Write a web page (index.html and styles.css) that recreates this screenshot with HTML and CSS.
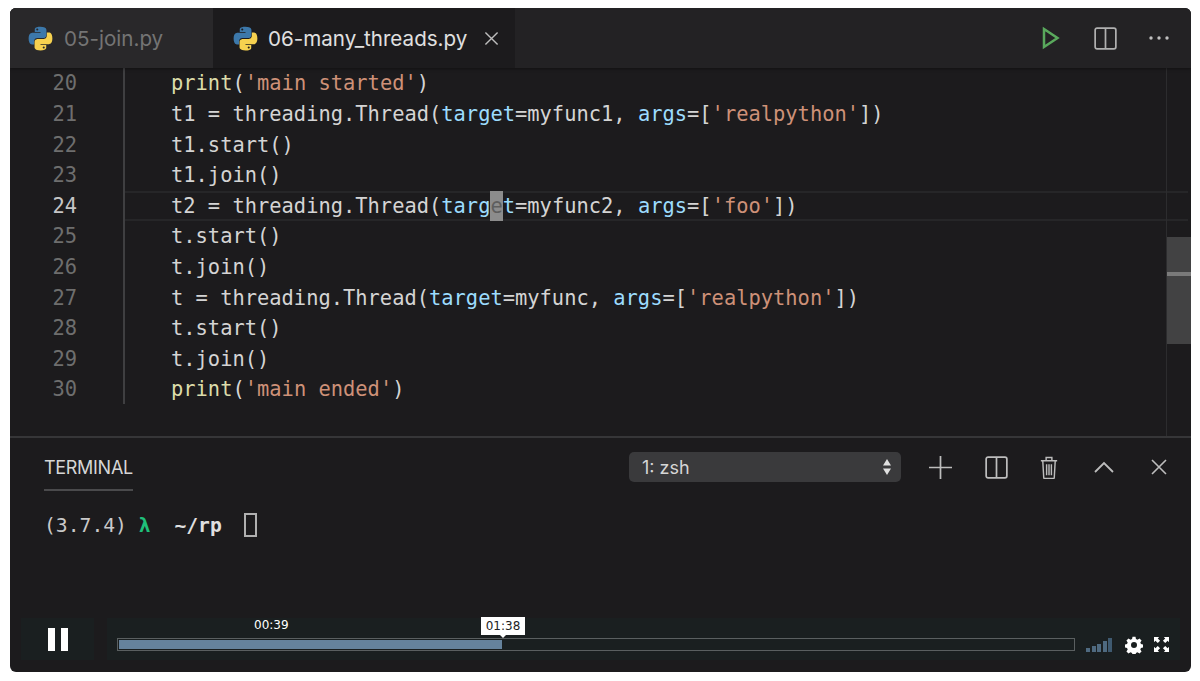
FILE: index.html
```html
<!DOCTYPE html>
<html lang="en">
<head>
<meta charset="utf-8">
<title>06-many_threads.py</title>
<link rel="stylesheet" href="styles.css">
</head>
<body>
<svg class="defs" width="0" height="0" aria-hidden="true">
  <symbol id="py" viewBox="0 0 24 24">
    <path fill="#3c78aa" d="M11.9 0.6C6.1 0.6 6.5 3.1 6.5 3.1l0 2.6h5.5v.8H4.400S0.600 6.100 0.600 12s3.300 5.700 3.300 5.700h2v-2.800s-.1-3.300 3.200-3.300h5.500s3.100 0 3.100-3V3.700S18 0.600 11.900 0.600zM8.900 2.300a1 1 0 1 1 0 2 1 1 0 0 1 0-2z"/>
    <path fill="#f6d14f" transform="rotate(180 12 12)" d="M11.9 0.6C6.100 0.600 6.500 3.100 6.500 3.100l0 2.600h5.500v.8H4.400S0.600 6.100 0.600 12s3.300 5.700 3.300 5.700h2v-2.800s-.1-3.300 3.200-3.300h5.500s3.100 0 3.100-3V3.700S18 0.600 11.900 0.600zM8.900 2.300a1 1 0 1 1 0 2 1 1 0 0 1 0-2z"/>
  </symbol>
  <symbol id="split" viewBox="0 0 24 24">
    <rect x="1.200" y="1.200" width="21.600" height="21.600" rx="2" fill="none" stroke="currentColor" stroke-width="1.800"/>
    <path d="M12 1.200v21.600" stroke="currentColor" stroke-width="1.800"/>
  </symbol>
</svg>
<main class="window">
  <header class="tabs">
    <div class="tab inactive">
      <svg class="py-icon"><use href="#py"/></svg>
      <span>05-join.py</span>
    </div>
    <div class="tab active">
      <svg class="py-icon"><use href="#py"/></svg>
      <span>06-many_threads.py</span>
      <svg class="tab-close" viewBox="0 0 16 16"><path d="M1.500 1.500l13 13M14.500 1.500l-13 13" stroke="currentColor" stroke-width="1.500" fill="none"/></svg>
    </div>
    <div class="tab-actions">
      <svg class="run" viewBox="0 0 18 24"><path d="M2 3l13.500 9L2 21z" fill="none" stroke="#59a85c" stroke-width="2.500"/></svg>
      <svg class="split-big"><use href="#split"/></svg>
      <svg class="more" viewBox="0 0 22 6"><circle cx="3" cy="3" r="1.700"/><circle cx="11" cy="3" r="1.700"/><circle cx="19" cy="3" r="1.700"/></svg>
    </div>
  </header>

  <section class="editor">
    <div class="gutter">
      <div>20</div><div>21</div><div>22</div><div>23</div><div class="cur">24</div><div>25</div><div>26</div><div>27</div><div>28</div><div>29</div><div>30</div>
    </div>
    <div class="code">
      <div class="line"><span class="fn">print</span>(<span class="str">'main started'</span>)</div>
      <div class="line">t1 = threading.Thread(<span class="kw">target</span>=myfunc1, <span class="kw">args</span>=[<span class="str">'realpython'</span>])</div>
      <div class="line">t1.start()</div>
      <div class="line">t1.join()</div>
      <div class="line current">t2 = threading.Thread(<span class="kw">targ</span><span class="caret">e</span><span class="kw">t</span>=myfunc2, <span class="kw">args</span>=[<span class="str">'foo'</span>])</div>
      <div class="line">t.start()</div>
      <div class="line">t.join()</div>
      <div class="line">t = threading.Thread(<span class="kw">target</span>=myfunc, <span class="kw">args</span>=[<span class="str">'realpython'</span>])</div>
      <div class="line">t.start()</div>
      <div class="line">t.join()</div>
      <div class="line"><span class="fn">print</span>(<span class="str">'main ended'</span>)</div>
    </div>
    <div class="ruler"><div class="slider"><div class="marker"></div></div></div>
  </section>

  <section class="terminal">
    <div class="term-head">
      <div class="term-title">TERMINAL</div>
      <div class="term-select">
        <span>1: zsh</span>
        <svg class="updown" viewBox="0 0 8 16"><path d="M4 0l4 6.500H0zM4 16l4-6.500H0z" fill="currentColor"/></svg>
      </div>
      <svg class="ti plus" viewBox="0 0 24 24"><path d="M12 0v24M0 12h24" stroke="currentColor" stroke-width="1.800" fill="none"/></svg>
      <svg class="ti split-small"><use href="#split"/></svg>
      <svg class="ti trash" viewBox="0 0 18 24" fill="none" stroke="currentColor" stroke-width="1.500"><path d="M0.500 5h17M6 5V1.500h6V5M2.500 5l1 17.500c0 .6.500 1 1 1h9c.5 0 1-.4 1-1l1-17.500M6.500 8.500v11.500M9 8.500v11.500M11.500 8.500v11.500"/></svg>
      <svg class="ti chev" viewBox="0 0 20 12"><path d="M1 11l9-9 9 9" stroke="currentColor" stroke-width="1.800" fill="none"/></svg>
      <svg class="ti close" viewBox="0 0 16 16"><path d="M1 1l14 14M15 1L1 15" stroke="currentColor" stroke-width="1.600" fill="none"/></svg>
    </div>
    <div class="prompt"><span>(3.7.4) </span><b class="lambda">λ</b><b>&nbsp; ~/rp</b><span class="block-cursor"></span></div>
    <div class="player">
      <div class="play-btn"><i></i><i></i></div>
      <div class="bar-wrap">
        <div class="track">
          <div class="fill"></div>
          <span class="time-plain">00:39</span>
          <span class="time-tip">01:38</span>
        </div>
        <div class="signal"><i></i><i></i><i></i><i></i><i></i></div>
        <svg class="gear" viewBox="0 0 24 24"><path fill="#fff" fill-rule="evenodd" d="M10 1h4l.6 3 2.100.9 2.600-1.700 2.800 2.800-1.700 2.600.9 2.100 3 .6v4l-3 .6-.9 2.100 1.700 2.600-2.800 2.800-2.600-1.700-2.100.9-.6 3h-4l-.6-3-2.100-.9-2.600 1.700-2.800-2.800 1.700-2.600-.9-2.100-3-.6v-4l3-.6.9-2.100-1.700-2.600 2.800-2.800 2.600 1.700 2.100-.9zM12 8a4 4 0 1 0 0 8 4 4 0 0 0 0-8z"/></svg>
        <svg class="full" viewBox="0 0 16 16" fill="#fff"><path d="M0 0h5.500L4 1.500 6.500 4 4 6.500 1.500 4 0 5.500zM16 0v5.500L14.500 4 12 6.500 9.500 4 12 1.500 10.500 0zM0 16v-5.500L1.500 12 4 9.500 6.500 12 4 14.500 5.500 16zM16 16h-5.500L12 14.500 9.500 12 12 9.500 14.500 12 16 10.500z"/></svg>
      </div>
    </div>
  </section>
</main>
</body>
</html>
```
FILE: styles.css
```css
* { box-sizing: border-box; }
html, body { margin: 0; height: 100%; background: #fff; }
body { padding: 8px 9px 9px 10px; overflow: hidden; }
.defs { position: absolute; }
.window {
  height: 664px;
  display: flex;
  flex-direction: column;
  background: #1c1b1d;
  border-radius: 6px;
  overflow: hidden;
  color: #cfcfcf;
}
.tabs {
  height: 60px;
  flex: none;
  display: flex;
  align-items: stretch;
  background: #232224;
  font-family: Inter, sans-serif;
  font-size: 20.600px;
  box-shadow: 0 1px 3px rgba(0,0,0,.4);
  position: relative;
  z-index: 1;
}
.tab { display: flex; align-items: center; white-space: nowrap; flex: none; }
.inactive { width: 203px; padding-left: 18px; color: #747474; background: #29282a; gap: 11px; }
.active { width: 302px; padding-left: 20px; color: #e0e0e0; background: #1c1b1d; gap: 10px; }
.py-icon { width: 25px; height: 25px; flex: none; }
.tab-close { width: 15px; height: 15px; margin-left: 7px; color: #bdbdbd; }
.tab-actions { margin-left: auto; display: flex; align-items: center; padding-right: 21px; }
.run { width: 18px; height: 24px; margin-right: 1px; }
.split-big { width: 23px; height: 23px; margin-left: 33px; color: #b0b0b0; }
.more { width: 22px; height: 6px; margin-left: 31px; fill: #c0c0c0; }

.editor {
  height: 370px;
  flex: none;
  display: flex;
  position: relative;
  font-family: "DejaVu Sans Mono", monospace;
  font-size: 20.420px;
  line-height: 30.600px;
  border-bottom: 2px solid #363638;
  color: #d4d4d4;
}
.gutter { width: 113px; flex: none; padding: .4px 46px 0 0; text-align: right; color: #6e6e6e; }
.gutter .cur { color: #c6c6c6; }
.code { flex: 1; border-left: 2px solid #3f3f41; height: 336px; padding: .4px 0 0 46px; }
.line { height: 30.600px; white-space: pre; }
.current {
  box-shadow: inset 0 2px 0 #262628, inset 0 -2px 0 #262628;
  margin: 0 3px 0 -46px;
  padding-left: 46px;
}
.fn { color: #dcdcaa; }
.str { color: #ce9178; }
.kw { color: #9cdcfe; }
.caret { background: #8c8c8c; color: #5e5e5e; display: inline-block; height: 30px; }
.ruler {
  position: absolute;
  right: 0; top: 0; bottom: 0;
  width: 25px;
  border-left: 1px solid #2c2c2e;
}
.slider {
  position: absolute;
  left: 0; right: 0;
  top: 169px;
  height: 107px;
  background: #424243;
}
.marker { position: absolute; left: 0; right: 0; top: 35px; height: 4px; background: #7a7a7a; }

.terminal { flex: 1; display: flex; flex-direction: column; min-height: 0; }
.term-head { height: 58px; flex: none; display: flex; align-items: center; padding: 0 22px 0 34px; color: #bdbdbd; font-family: Inter, sans-serif; }
.term-title {
  width: 89px;
  height: 53px;
  padding-top: 19px;
  align-self: flex-start;
  font-size: 18px;
  color: #d6d6d6;
  border-bottom: 2px solid #4a4a4c;
  letter-spacing: -.3px;
}
.term-select {
  width: 272px;
  height: 30px;
  margin-left: 496px;
  padding: 0 10px 0 13px;
  display: flex;
  align-items: center;
  justify-content: space-between;
  background: #3a3a3c;
  border-radius: 5px;
  font-size: 18px;
  color: #d6d6d6;
}
.updown { width: 8px; height: 16px; color: #e0e0e0; }
.ti { flex: none; }
.plus { width: 23px; height: 23px; margin-left: 28px; }
.split-small { width: 23px; height: 23px; margin-left: 33px; }
.trash { width: 18px; height: 23px; margin-left: 32px; }
.chev { width: 20px; height: 12px; margin-left: 36px; }
.close { width: 16px; height: 16px; margin-left: 37px; }
.prompt {
  margin: 14px 0 0 34px;
  height: 30px;
  display: flex;
  align-items: center;
  font-family: "DejaVu Sans Mono", monospace;
  font-size: 19.700px;
  color: #c9c9c9;
  white-space: pre;
}
.prompt b { color: #e0e0e0; }
.prompt .lambda { color: #1fbf7a; }
.block-cursor { width: 13px; height: 24px; border: 2px solid #b0b0b0; margin-left: 22px; }
.player { margin-top: auto; height: 54px; display: flex; gap: 13px; padding: 0 0 12px 11px; flex: none; }
.play-btn {
  width: 73px;
  height: 42px;
  background: #1a1f20;
  display: flex;
  justify-content: center;
  align-items: center;
  gap: 6px;
}
.play-btn i { width: 7px; height: 23px; background: #fff; }
.bar-wrap {
  width: 1073px;
  height: 42px;
  background: #1a1f20;
  display: flex;
  align-items: center;
  padding: 11px 0 0 10px;
}
.track {
  width: 958px;
  height: 13px;
  position: relative;
  border: 1px solid #5a5f60;
  padding: 1px;
  flex: none;
}
.fill { width: 383px; height: 100%; background: #65829c; }
.time-plain, .time-tip {
  position: absolute;
  font-family: "DejaVu Sans", sans-serif;
  font-size: 12px;
  line-height: 18px;
}
.time-plain { left: 136px; top: -23px; color: #fff; }
.time-tip {
  left: 363px;
  top: -22px;
  width: 44px;
  text-align: center;
  background: #fff;
  color: #222;
}
.time-tip::after {
  content: "";
  position: absolute;
  left: 50%;
  margin-left: -3px;
  top: 18px;
  border: 3px solid transparent;
  border-top-color: #fff;
  border-bottom: 0;
}
.signal { display: flex; align-items: flex-end; gap: 1.500px; height: 15px; margin-left: 11px; margin-top: -1px; }
.signal i { width: 4px; background: #4f6a80; }
.signal i:nth-child(1) { height: 4px; }
.signal i:nth-child(2) { height: 6px; }
.signal i:nth-child(3) { height: 8px; }
.signal i:nth-child(4) { height: 11px; }
.signal i:nth-child(5) { height: 14px; background: #3f5a70; }
.gear { width: 18px; height: 18px; margin-left: 13px; }
.full { width: 15px; height: 15px; margin-left: 11px; }
```
